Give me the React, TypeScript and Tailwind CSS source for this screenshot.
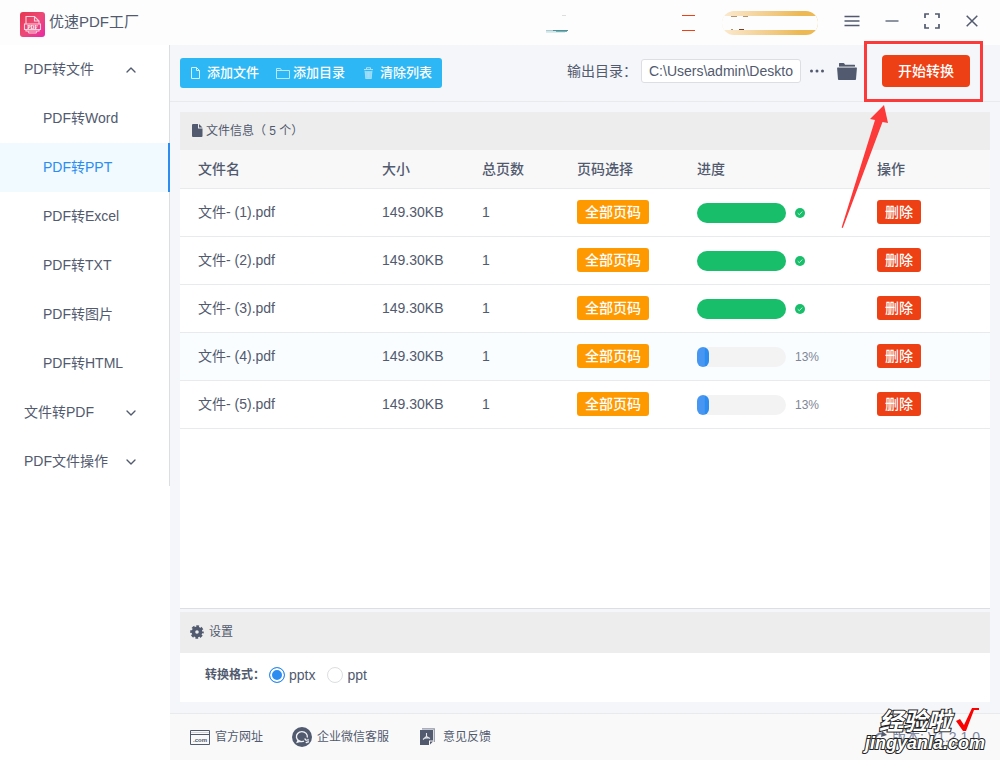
import { useState } from 'react';
import { ChevronDown, ChevronUp } from 'lucide-react';

const menuItems = ['PDF转Word', 'PDF转PPT', 'PDF转Excel', 'PDF转TXT', 'PDF转图片', 'PDF转HTML'];

const initialFiles = [
  { id: 1, name: '文件- (1).pdf', size: '149.30KB', pages: 1, progress: 100 },
  { id: 2, name: '文件- (2).pdf', size: '149.30KB', pages: 1, progress: 100 },
  { id: 3, name: '文件- (3).pdf', size: '149.30KB', pages: 1, progress: 100 },
  { id: 4, name: '文件- (4).pdf', size: '149.30KB', pages: 1, progress: 13 },
  { id: 5, name: '文件- (5).pdf', size: '149.30KB', pages: 1, progress: 13 },
];

function Logo() {
  return (
    <svg width="25" height="25" viewBox="0 0 25 25" className="mt-1 shrink-0">
      <defs>
        <linearGradient id="logoFill" x1="0" y1="0" x2="1" y2="1">
          <stop offset="0" stopColor="#e8354f" />
          <stop offset="0.5" stopColor="#ec4a76" />
          <stop offset="1" stopColor="#ea28a8" />
        </linearGradient>
      </defs>
      <rect width="25" height="25" rx="3" fill="url(#logoFill)" />
      <g fill="none" stroke="#fbd3dc" strokeWidth="1.1">
        <path d="M6 12V4.500h8.500L19 9v3M14.500 4.500V9H19" />
        <path d="M4.500 12h16v5.500h-16zM6 17.500v1.500h13v-1.500M8 19.500l1 1.500h7l1-1.500" />
      </g>
      <text x="12.500" y="16.700" textAnchor="middle" fontSize="5.500" fontWeight="700" fontFamily="Liberation Serif, serif" fill="#fff">PDF</text>
    </svg>
  );
}

function Header() {
  return (
    <header className="flex h-[45px] items-center bg-[#fdfdfd] pl-5 pr-2">
      <Logo />
      <h1 className="ml-1 text-[15px]">优速PDF工厂</h1>

      <div className="ml-auto flex items-center">
        {/* account avatar */}
        <svg width="24" height="20" viewBox="0 0 24 20" className="mr-[113px]" shapeRendering="crispEdges">
          <path d="M17 2.500h4" stroke="#ddd" />
          <path d="M1 17.500h7" stroke="#a9cdd0" />
          <path d="M8 17.500h15" stroke="#4b9299" />
          <path d="M1 18.500h10" stroke="#d5e5e7" />
          <path d="M11 18.500h11" stroke="#7db0b5" />
          <path d="M1 19.500h19" stroke="#dcebec" />
        </svg>
        <div className="mr-[27px] h-4 w-[13px] border-y border-[#ed4014]"></div>
        <div className="mr-[14px] h-6 w-24 overflow-hidden rounded-full bg-linear-to-r from-[#fbead0] to-[#ecb955] to-80% pt-[5px]">
          <div className="flex h-[14px] flex-col justify-between bg-[#fdfdfd] pl-[9px]">
            <div className="flex gap-[6px]">
              <div className="h-px w-[6px] bg-[#b39472]"></div>
              <div className="h-px w-[5px] bg-[#b39472]"></div>
            </div>
            <div className="flex gap-[6px]">
              <div className="h-px w-[2px] bg-[#b39472]"></div>
              <div className="h-px w-[5px] bg-[#74402c]"></div>
            </div>
          </div>
        </div>
        <button aria-label="菜单" className="mb-[3px] flex h-10 w-10 items-center justify-center">
          <svg width="16" height="12" viewBox="0 0 16 12" stroke="#515a6e" strokeWidth="1.300"><path d="M.5 1.500h15M.5 6h15M.5 10.500h15" /></svg>
        </button>
        <button aria-label="最小化" className="mb-[3px] flex h-10 w-10 items-center justify-center">
          <svg width="14" height="12" viewBox="0 0 14 12" stroke="#515a6e" strokeWidth="1.300"><path d="M.5 6h13" /></svg>
        </button>
        <button aria-label="最大化" className="mb-[3px] flex h-10 w-10 items-center justify-center">
          <svg width="16" height="16" viewBox="0 0 16 16" fill="none" stroke="#515a6e" strokeWidth="1.700"><path d="M1 5V1h4M11 1h4v4M15 11v4h-4M5 15H1v-4" /></svg>
        </button>
        <button aria-label="关闭" className="mb-[3px] flex h-10 w-10 items-center justify-center">
          <svg width="12" height="12" viewBox="0 0 12 12" stroke="#515a6e" strokeWidth="1.500"><path d="M.7.7l10.600 10.600M11.300.7L.7 11.300" /></svg>
        </button>
      </div>
    </header>
  );
}

interface SidebarProps {
  active: string;
  onSelect: (name: string) => void;
}

function Sidebar({ active, onSelect }: SidebarProps) {
  return (
    <aside className="w-[170px] shrink-0 bg-white">
      <nav className="flex flex-col border-r border-[#dcdee2] text-sm">
        <button className="flex h-[49px] items-center justify-between pb-0.5 pl-6 pr-[30px] text-left">
          PDF转文件
          <ChevronUp className="mt-0.5 h-4 w-4" />
        </button>
        {menuItems.map((item) => (
          <button
            key={item}
            onClick={() => onSelect(item)}
            className={
              item === active
                ? '-mr-px h-[49px] border-r-2 border-[#2d8cf0] bg-[#f0faff] pb-0.5 pl-[43px] text-left text-[#2d8cf0]'
                : 'h-[49px] pb-0.5 pl-[43px] text-left'
            }
          >
            {item}
          </button>
        ))}
        <button className="flex h-[49px] items-center justify-between pb-0.5 pl-6 pr-[30px] text-left">
          文件转PDF
          <ChevronDown className="mt-0.5 h-4 w-4" />
        </button>
        <button className="flex h-[49px] items-center justify-between pb-0.5 pl-6 pr-[30px] text-left">
          PDF文件操作
          <ChevronDown className="mt-0.5 h-4 w-4" />
        </button>
      </nav>
    </aside>
  );
}

function Toolbar({ onClear }: { onClear: () => void }) {
  return (
    <div className="flex h-[57px] items-center border-b border-[#e8eaec] pl-[10px] pr-[30px]">
      <div className="flex h-[30px] items-center rounded-[3px] bg-[#2db7f5] px-[10px] text-[13px] font-medium text-white">
        <button className="flex items-center">
          <svg width="11" height="12" viewBox="0 0 11 12" fill="none" stroke="#d5f1fd" className="mr-[6px]"><path d="M1.500.5h5l3 3v8h-8zM6.500.5v3h3" /></svg>
          添加文件
        </button>
        <button className="ml-[17px] flex items-center">
          <svg width="14" height="12" viewBox="0 0 14 12" fill="none" stroke="#b9e7fc" className="mr-[3px]"><path d="M.5 1.500h4l1 2h8v8H.5zM.5 3.500h6" /></svg>
          添加目录
        </button>
        <button className="ml-[18px] flex items-center" onClick={onClear}>
          <svg width="11" height="12" viewBox="0 0 11 12" fill="none" stroke="#a9e1fb" className="mr-[6px]"><path d="M1 2.500h9M3.500 2V.7h4V2" /><path d="M1.800 4h7.400l-.6 8H2.400z" fill="#8fd8f9" stroke="none" /><path d="M2 3.500l.8 8h5.400l.8-8M4.200 4.500v6M5.500 4.500v6M6.800 4.500v6" strokeWidth=".7" /></svg>
          清除列表
        </button>
      </div>

      <div className="mb-1 ml-auto flex items-center">
        <label htmlFor="outputDir" className="text-sm">输出目录：</label>
        <input
          id="outputDir"
          type="text"
          defaultValue="C:\Users\admin\Deskto"
          className="ml-1 h-6 w-40 rounded-[3px] border border-[#dcdee2] bg-white px-[7px] text-sm outline-none"
        />
        <button aria-label="选择目录" className="ml-2 flex w-4 justify-center">
          <svg width="16" height="4" viewBox="0 0 16 4" fill="#515a6e"><circle cx="2.500" cy="2" r="1.500" /><circle cx="8" cy="2" r="1.500" /><circle cx="13.500" cy="2" r="1.500" /></svg>
        </button>
        <button aria-label="打开目录" className="ml-3">
          <svg width="20" height="17" viewBox="0 0 20 17" fill="#515a6e"><path d="M2 .5q0-.5.5-.5h4q.5 0 1 .8l.5.9h9.500q.5 0 .5.5V4H2z" /><path d="M.7 4.500h18.600q.7 0 .6.700l-.9 11q-.1.800-.8.800H1.800q-.7 0-.8-.8l-.9-11q-.1-.7.600-.7z" /><path d="M2 3.800h16" stroke="#c3c7d0" strokeWidth=".8" /></svg>
        </button>
        <div className="relative ml-[25px]">
          <button className="h-8 w-[88px] rounded bg-[#ed4014] text-sm font-medium text-white">开始转换</button>
          {/* callout frame and arrow */}
          <div className="pointer-events-none absolute -bottom-[15px] -left-[18px] -right-[13px] -top-[14px] border-3 border-[#fd3a3a]"></div>
          <svg width="48" height="124" viewBox="0 0 48 124" fill="#fd3a3a" className="pointer-events-none absolute -left-[41px] top-[50px]">
            <path d="M43 0L29 14l5 1L.6 122.500l1.200.5L41.500 17l5.500 1z" />
          </svg>
        </div>
      </div>
    </div>
  );
}

function Progress({ value }: { value: number }) {
  const done = value >= 100;
  return (
    <div className="mt-px flex items-center">
      <div className="h-5 w-[89px] rounded-full bg-[#f3f3f3]">
        <div
          className={done ? 'h-full rounded-full bg-[#19be6b]' : 'h-full rounded-full bg-linear-to-r from-[#4797f2] from-60% to-[#2d8cf0] to-70%'}
          style={{ width: `${value}%` }}
        ></div>
      </div>
      {done ? (
        <svg width="10" height="10" viewBox="0 0 10 10" className="ml-[9px]">
          <circle cx="5" cy="5" r="5" fill="#19be6b" />
          <path d="M2.700 5.200l1.600 1.500 3-3.200" fill="none" stroke="#c9f0dc" strokeWidth=".9" />
        </svg>
      ) : (
        <span className="ml-[9px] text-xs text-[#808695]">{value}%</span>
      )}
    </div>
  );
}

function FileTable({ files, onDelete }: { files: typeof initialFiles; onDelete: (id: number) => void }) {
  return (
    <section className="flex flex-1 flex-col border-b border-[#dcdee2] bg-white">
      <h2 className="flex h-[38px] items-center bg-[#ededed] pl-3 text-xs">
        <svg width="11" height="13" viewBox="0 0 11 13" fill="#515a6e" className="mb-0.5 mr-[3px]"><path d="M1 0h5v4.500h4.500V12q0 1-1 1H1q-1 0-1-1V1q0-1 1-1zM7 0l3.500 3.500H7z" /></svg>
        文件信息（ 5 个）
      </h2>
      <table className="w-full table-fixed text-left text-sm">
        <colgroup>
          <col />
          <col className="w-[100px]" />
          <col className="w-[95px]" />
          <col className="w-[120px]" />
          <col className="w-[180px]" />
          <col className="w-[131px]" />
        </colgroup>
        <thead className="bg-[#f8f8f9]">
          <tr className="h-[38px] border-b border-[#e8eaec]">
            <th className="pl-[18px] font-medium">文件名</th>
            <th className="pl-[18px] font-medium">大小</th>
            <th className="pl-[18px] font-medium">总页数</th>
            <th className="pl-[18px] font-medium">页码选择</th>
            <th className="pl-[18px] font-medium">进度</th>
            <th className="pl-[18px] font-medium">操作</th>
          </tr>
        </thead>
        <tbody>
          {files.map((file) => (
            <tr key={file.id} className={file.id === 4 ? 'h-12 border-b border-[#e8eaec] bg-[#f9fdff]' : 'h-12 border-b border-[#e8eaec]'}>
              <td className="pl-[18px]">{file.name}</td>
              <td className="pl-[18px]">{file.size}</td>
              <td className="pl-[18px]">{file.pages}</td>
              <td className="pl-[18px]">
                <button className="block h-6 w-[72px] rounded-[3px] bg-[#ff9900] font-medium text-white">全部页码</button>
              </td>
              <td className="pl-[18px]">
                <Progress value={file.progress} />
              </td>
              <td className="pl-[18px]">
                <button onClick={() => onDelete(file.id)} className="block h-6 w-11 rounded-[3px] bg-[#ed4014] font-medium text-white">删除</button>
              </td>
            </tr>
          ))}
        </tbody>
      </table>
    </section>
  );
}

function Settings() {
  const [format, setFormat] = useState('pptx');

  return (
    <section className="mt-[3px] bg-white">
      <h2 className="flex h-[41px] items-center bg-[#ededed] pb-0.5 pl-[10px] text-xs">
        <svg width="14" height="14" viewBox="0 0 14 14" className="mr-[5px]">
          <circle cx="7" cy="7" r="3.600" fill="none" stroke="#515a6e" strokeWidth="3.600" />
          <circle cx="7" cy="7" r="5.700" fill="none" stroke="#515a6e" strokeWidth="2.200" strokeDasharray="2.700 1.777" strokeDashoffset="1.350" />
        </svg>
        设置
      </h2>
      <fieldset className="flex h-[49px] items-center pb-[6px] pl-[25px]">
        <span className="w-16 text-xs font-bold">转换格式：</span>
        {['pptx', 'ppt'].map((name) => (
          <label key={name} className="mr-3 flex items-center gap-1 text-sm">
            <input
              type="radio"
              name="format"
              value={name}
              checked={format === name}
              onChange={() => setFormat(name)}
              className="h-4 w-4 appearance-none rounded-full border border-[#dcdee2] bg-white checked:border-[#2d8cf0] checked:bg-[#2d8cf0] checked:shadow-[inset_0_0_0_2px_#fff]"
            />
            {name}
          </label>
        ))}
      </fieldset>
    </section>
  );
}

function Footer() {
  return (
    <footer className="relative mt-[11px] flex h-[47px] items-center border-t border-[#e8eaec] bg-[#f9f9fa] pl-5 pr-5 text-xs">
      <a href="#site" className="flex items-center">
        <svg width="20" height="15" viewBox="0 0 20 15" className="mr-[5px]">
          <path d="M.5.5h19v14H.5zM.5 4.500h19" fill="none" stroke="#515a6e" />
          <path d="M1 2.500h18" stroke="#d0d3d9" />
          <text x="10" y="12" textAnchor="middle" fontSize="6" fontWeight="700" fontFamily="Liberation Sans, sans-serif" fill="#515a6e">.com</text>
        </svg>
        官方网址
      </a>
      <a href="#service" className="ml-[29px] flex items-center">
        <svg width="20" height="20" viewBox="0 0 20 20" className="mr-[5px]">
          <circle cx="10" cy="10" r="10" fill="#515a6e" />
          <path d="M15.300 10.500A5.500 5 0 1 0 12 14.200M6.200 13l-.9 2.200 2.700-.9" fill="none" stroke="#f1f2f4" strokeWidth="1.400" />
          <path d="M13 12l1.200 1.200M16 12.500v.8M14.300 15.500h.8M16.500 15l-.5-.3" stroke="#f1f2f4" strokeWidth="1.400" strokeLinecap="round" />
        </svg>
        企业微信客服
      </a>
      <a href="#feedback" className="ml-[31px] flex items-center">
        <svg width="15" height="18" viewBox="0 0 15 18" className="mr-2">
          <path d="M2 .8h12.300V14" fill="none" stroke="#8f95a3" strokeWidth="1.200" />
          <path d="M0 2h13v10.500H9V17H0z" fill="#515a6e" />
          <path d="M10 13.500h3l-3 3z" fill="#515a6e" />
          <path d="M6.500 5v3.500L3 11.500M6.500 8.500l3.500 2M4.500 10.300l4.500-.6" fill="none" stroke="#e4e6ea" strokeWidth="1.100" />
        </svg>
        意见反馈
      </a>
      <div className="ml-auto flex items-center text-sm text-[#8087a0]">
        <svg width="15" height="15" viewBox="0 0 15 15" className="mr-1"><path d="M2 10a6 6 0 0 1 8-6" fill="none" stroke="#7b829a" strokeWidth="2" /><path d="M9 1l5 4-6 2z" fill="#515a6e" /></svg>
        版本: V1.2.1.0
      </div>

      {/* site watermark */}
      <div className="absolute -top-[6px] right-[21px] flex items-start gap-1 font-bold text-white">
        <span className="text-[24px] leading-7 italic [-webkit-text-stroke:2px_#222] [paint-order:stroke_fill]">经验啦</span>
        <svg width="24" height="24" viewBox="0 0 24 24"><path d="M1 13l4-2 4 6L17 0h7v2h-5L11 23H8z" fill="#fb0202" /></svg>
      </div>
      <div className="absolute right-[15px] top-[17px] text-[18px] leading-6 font-bold italic text-white [-webkit-text-stroke:2px_#222] [paint-order:stroke_fill]">
        jingyanla.com
      </div>
    </footer>
  );
}

export default function App() {
  const [active, setActive] = useState('PDF转PPT');
  const [files, setFiles] = useState(initialFiles);

  return (
    <div className="flex min-h-screen flex-col bg-white font-['Liberation_Sans','Noto_Sans_CJK_SC',sans-serif] text-[#515a6e]">
      <Header />
      <div className="flex flex-1">
        <Sidebar active={active} onSelect={setActive} />
        <main className="flex min-w-0 flex-1 flex-col bg-[#f5f6f9]">
          <Toolbar onClear={() => setFiles([])} />
          <div className="flex flex-1 flex-col px-[10px] pt-[10px]">
            <FileTable files={files} onDelete={(id) => setFiles(files.filter((f) => f.id !== id))} />
            <Settings />
          </div>
          <Footer />
        </main>
      </div>
    </div>
  );
}
